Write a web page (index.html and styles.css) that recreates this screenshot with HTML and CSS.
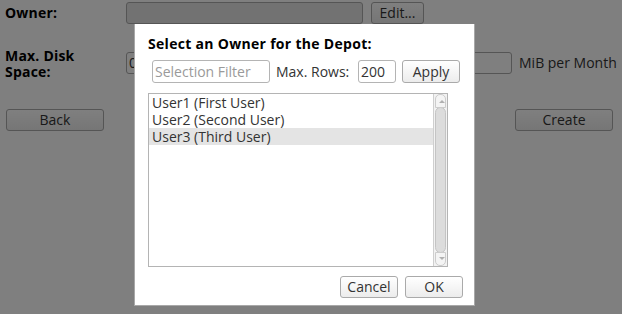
FILE: index.html
```html
<!DOCTYPE html>
<html>
<head>
<meta charset="utf-8">
<link rel="stylesheet" href="styles.css">
</head>
<body>
<div class="page">
  <div class="form">
    <div class="label">Owner:</div>
    <div class="field owner-field"></div>
    <div class="cell"><button class="btn edit-btn">Edit...</button></div>

    <div class="label label-two">Max. Disk Space:</div>
    <div class="field disk-field">0</div>
    <div class="unit">MiB per Month</div>
  </div>
  <div class="actions">
    <button class="btn wide-btn">Back</button>
    <button class="btn wide-btn">Create</button>
  </div>
</div>

<div class="overlay"></div>

<div class="dialog">
  <div class="dialog-title">Select an Owner for the Depot:</div>
  <div class="filter-row">
    <div class="input filter-input">Selection Filter</div>
    <span class="rows-label">Max. Rows:</span>
    <div class="input rows-input">200</div>
    <button class="btn apply-btn">Apply</button>
  </div>
  <div class="listbox">
    <div class="items">
      <div class="item">User1 (First User)</div>
      <div class="item">User2 (Second User)</div>
      <div class="item selected">User3 (Third User)</div>
    </div>
    <div class="scrollbar">
      <div class="arrow arrow-up"></div>
      <div class="thumb"></div>
      <div class="arrow arrow-down"></div>
    </div>
  </div>
  <div class="dialog-buttons">
    <button class="btn cancel-btn">Cancel</button>
    <button class="btn ok-btn">OK</button>
  </div>
</div>
</body>
</html>
```

FILE: styles.css
```css
* { box-sizing: border-box; }

html, body {
  margin: 0;
  padding: 0;
  width: 622px;
  height: 314px;
  overflow: hidden;
  background: #ffffff;
  font-family: "Open Sans", "DejaVu Sans", sans-serif;
  font-size: 14px;
  color: #333333;
}

.page {
  padding: 2px 9px 0 5px;
}

.form {
  display: grid;
  grid-template-columns: 121px 237px 8px 53px 88px 7px auto;
  grid-template-rows: 22px 40px;
  row-gap: 22px;
  align-items: center;
}

.label {
  grid-column: 1;
  font-weight: bold;
  color: #000;
  line-height: 18px;
  letter-spacing: 0.2px;
}

.label-two {
  grid-row: 2;
  width: 100px;
  align-self: start;
  line-height: 16px;
  margin-top: 2px;
}

.field {
  height: 22px;
  border: 1px solid #aaaaaa;
  border-radius: 3px;
  background: #e4e4e4;
}

.owner-field {
  grid-column: 2;
}

.cell {
  grid-column: 4;
  display: flex;
}

.edit-btn {
  width: 53px;
}

.disk-field {
  grid-row: 2;
  grid-column: 2 / 6;
  background: #ffffff;
  padding-left: 2px;
  line-height: 20px;
  color: #333;
  align-self: start;
  margin-top: 6px;
}

.unit {
  grid-row: 2;
  grid-column: 7;
  align-self: start;
  line-height: 22px;
  margin-top: 6px;
  white-space: nowrap;
}

.actions {
  display: flex;
  justify-content: space-between;
  margin-top: 23px;
  padding-left: 1px;
}

.btn {
  font-family: inherit;
  font-size: 14px;
  color: #333;
  height: 22px;
  padding: 0;
  border: 1px solid #aaaaaa;
  border-radius: 3px;
  background: linear-gradient(#ffffff, #ececec);
  line-height: 20px;
}

.wide-btn {
  width: 98px;
}

.overlay {
  position: fixed;
  inset: 0;
  background: rgba(0, 0, 0, 0.5);
}

.dialog {
  position: absolute;
  left: 134px;
  top: 24px;
  width: 341px;
  height: 282px;
  background: #ffffff;
  border: 1px solid #a8a8a8;
  border-top: none;
  padding: 11px 13px 0 13px;
  display: flex;
  flex-direction: column;
}

.dialog-title {
  font-weight: bold;
  color: #000;
  line-height: 18px;
  font-size: 14px;
  letter-spacing: 0.3px;
}

.filter-row {
  display: flex;
  align-items: center;
  margin-top: 7px;
  padding-left: 4px;
  height: 23px;
}

.input {
  height: 23px;
  border: 1px solid #b4b4b4;
  border-radius: 3px;
  padding-left: 2px;
  line-height: 21px;
  background: #fff;
}

.filter-input {
  width: 118px;
  color: #9a9a9a;
}

.rows-label {
  margin-left: 6px;
  color: #333;
}

.rows-input {
  width: 38px;
  margin-left: auto;
  color: #333;
}

.apply-btn {
  width: 58px;
  height: 23px;
  margin-left: 6px;
  margin-right: 1px;
}

.listbox {
  margin-top: 10px;
  width: 300px;
  height: 174px;
  border: 1px solid #b4b4b4;
  display: flex;
}

.items {
  flex: 1;
  padding-top: 0;
}

.item {
  height: 17px;
  line-height: 17px;
  padding-left: 3px;
  color: #333;
}

.selected {
  background: #e4e4e4;
}

.scrollbar {
  width: 14px;
  border-left: 1px solid #cfcfcf;
  background: #f2f2f2;
  display: flex;
  flex-direction: column;
  padding: 0 1px;
}

.arrow {
  height: 14px;
  position: relative;
  background: #f4f4f4;
  border: 1px solid #cccccc;
}

.arrow-up {
  border-radius: 5px 5px 0 0;
}

.arrow-down {
  border-radius: 0 0 5px 5px;
}

.arrow::after {
  content: "";
  position: absolute;
  left: 3px;
  width: 0;
  height: 0;
  border-left: 3px solid transparent;
  border-right: 3px solid transparent;
}

.arrow-up::after {
  top: 5px;
  border-bottom: 3px solid #b0b0b0;
}

.arrow-down::after {
  top: 4px;
  border-top: 3px solid #b0b0b0;
}

.thumb {
  flex: 1;
  background: #dcdcdc;
  border: 1px solid #c4c4c4;
  border-radius: 6px;
  margin: -1px 0;
}

.dialog-buttons {
  display: flex;
  justify-content: flex-end;
  gap: 7px;
  margin-top: 9px;
}

.cancel-btn {
  width: 58px;
}

.ok-btn {
  width: 58px;
  margin-right: -2px;
}
```
